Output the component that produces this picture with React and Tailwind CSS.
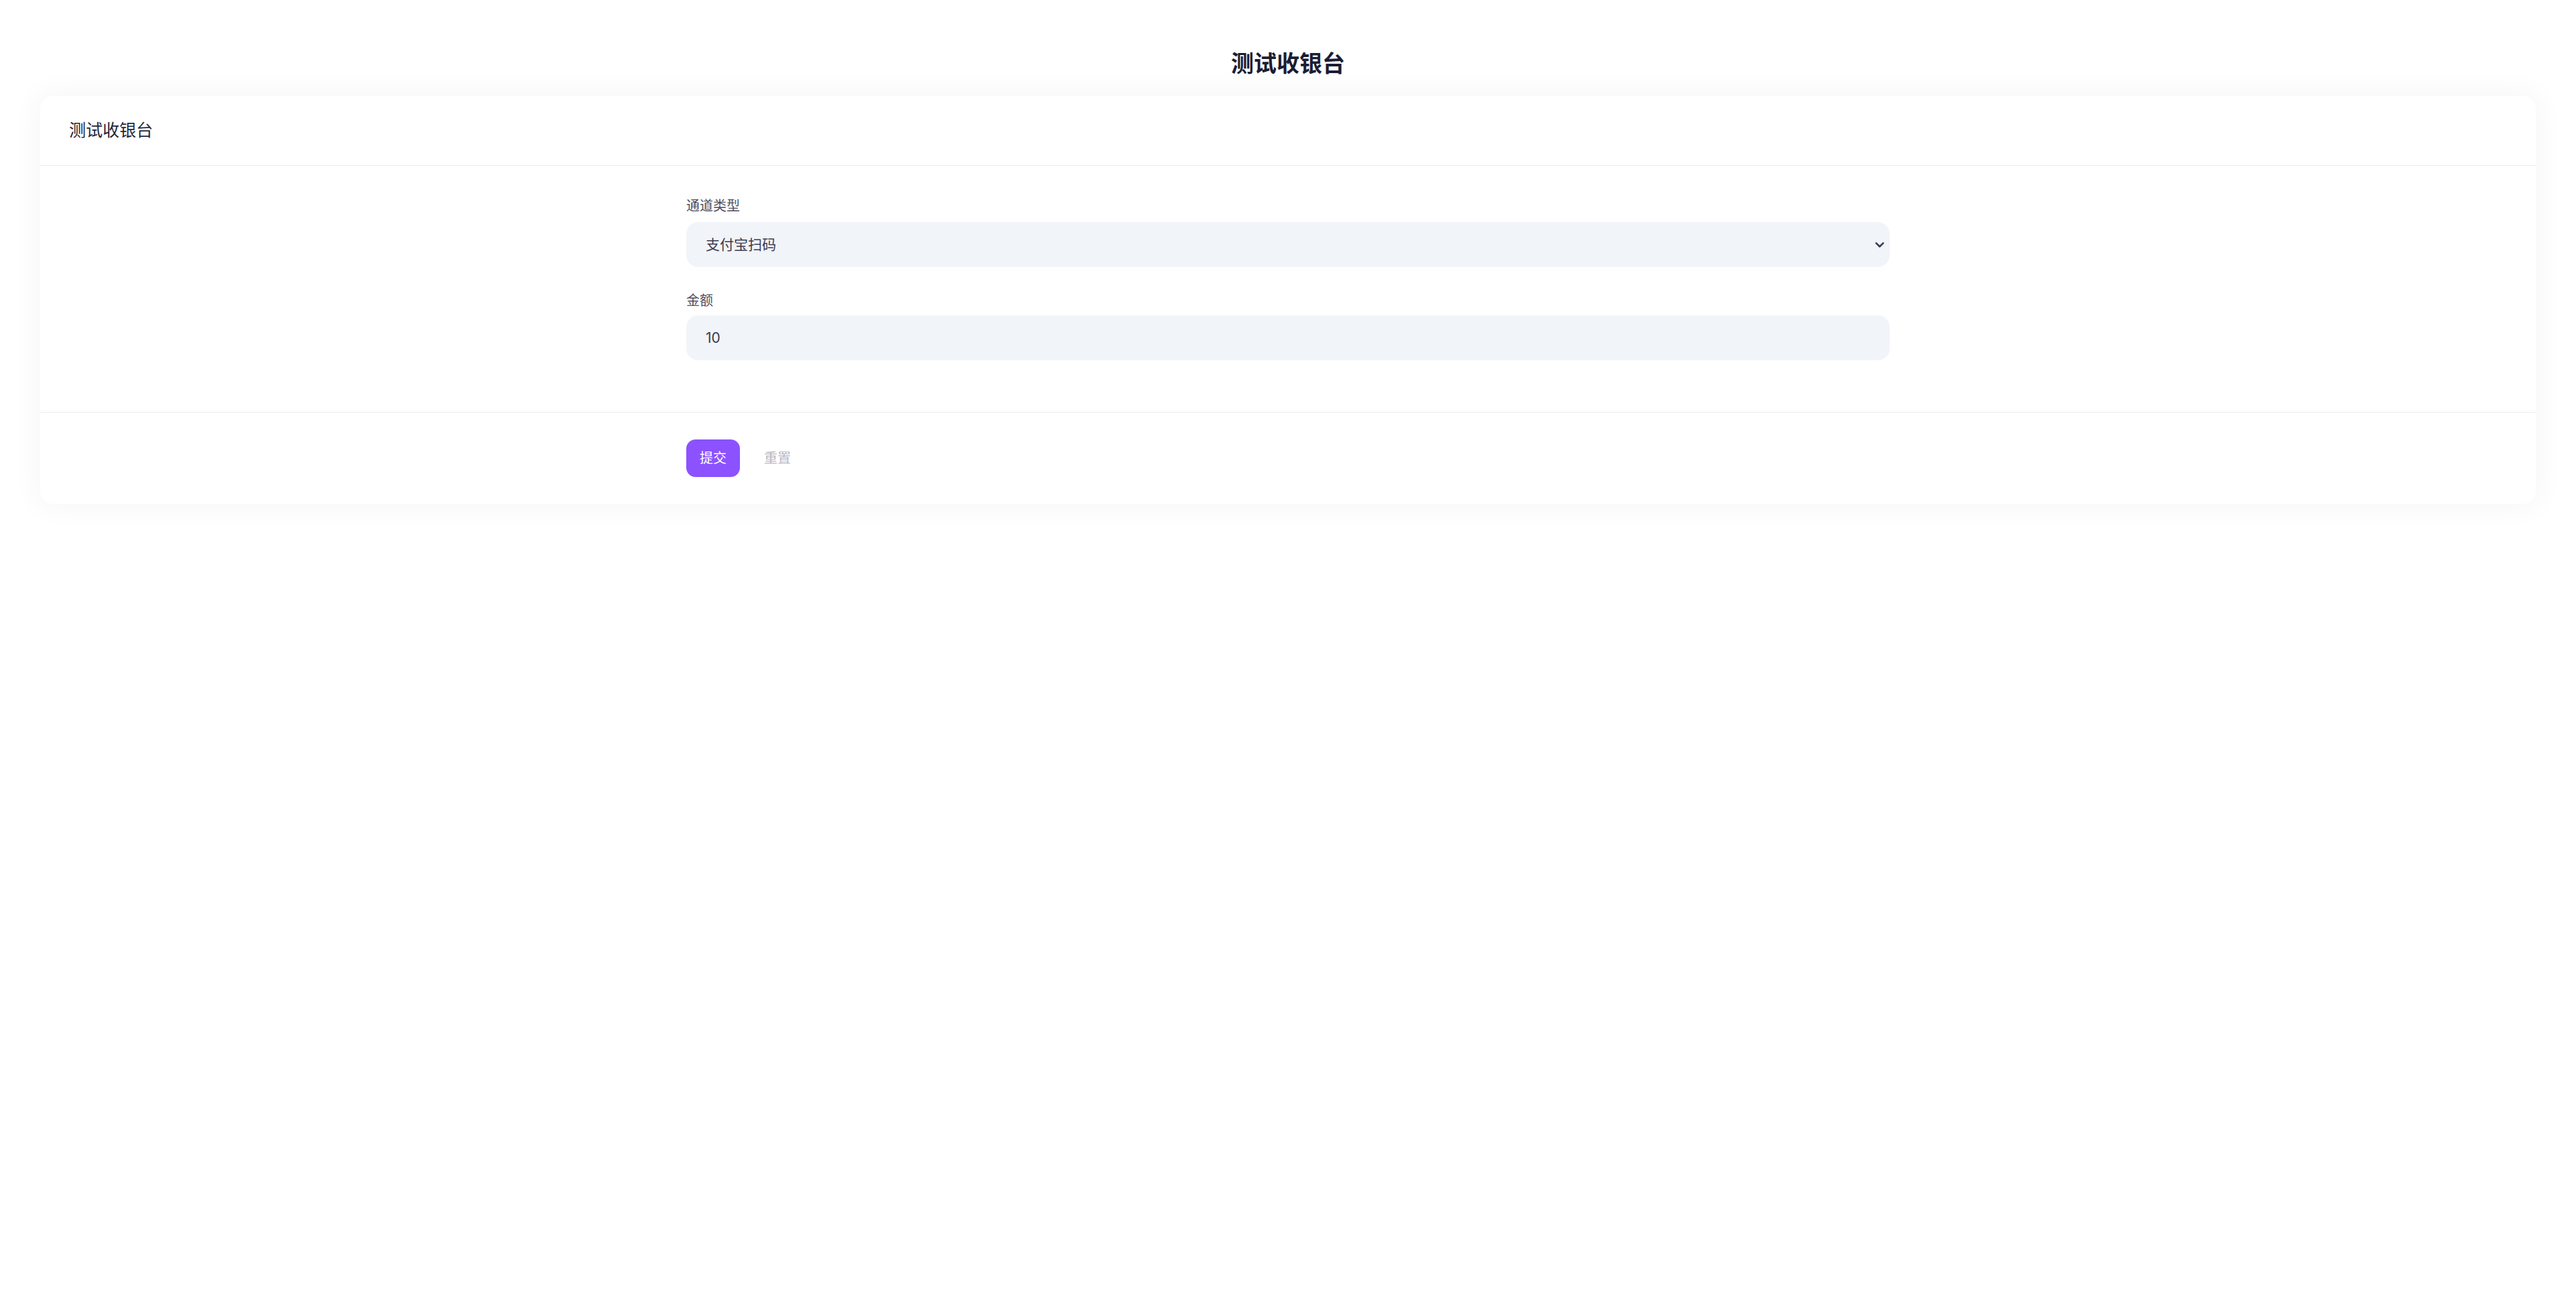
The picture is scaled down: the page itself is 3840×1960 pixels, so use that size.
import { useState } from "react";

const channels = ["支付宝扫码", "微信扫码", "银联支付"];

function Chevron() {
    return (
        <svg
            viewBox="0 0 14 9"
            className="pointer-events-none absolute right-[8px] top-1/2 h-[9px] w-[14px] -translate-y-1/2 text-[#3b3b52]"
            fill="none"
            stroke="currentColor"
            strokeWidth="2.6"
            strokeLinecap="round"
            strokeLinejoin="round"
        >
            <path d="M1.8 1.8 7 7 12.2 1.8" />
        </svg>
    );
}

export default function App() {
    const [channel, setChannel] = useState(channels[0]);
    const [amount, setAmount] = useState("10");

    const reset = () => {
        setChannel(channels[0]);
        setAmount("10");
    };

    return (
        <div className="min-h-screen bg-white px-[60px] font-['Inter','Noto_Sans_CJK_SC',sans-serif]">
            <h1 className="pt-[74px] text-center text-[34px] font-bold leading-[42px] text-[#1b1d33]">
                测试收银台
            </h1>

            <div className="mt-[27px] rounded-[20px] bg-white shadow-[0_0_40px_8px_rgba(0,0,0,0.035)]">
                {/* 卡片标题 */}
                <div className="flex h-[104px] items-center border-b border-[#ebeaf0] px-[43px]">
                    <span className="text-[25px] leading-none text-[#24263a]">测试收银台</span>
                </div>

                {/* 表单 */}
                <div className="border-b border-[#ebeaf0] pb-[77px] pt-[46px]">
                    <div className="mx-auto flex w-[1794px] flex-col">
                        <label className="text-[20px] leading-[28px] text-[#4e4e60]">通道类型</label>
                        <div className="relative mt-[10px]">
                            <select
                                value={channel}
                                onChange={(e) => setChannel(e.target.value)}
                                className="h-[67px] w-full appearance-none rounded-[18px] bg-[#f1f4f8] px-[29px] text-[21px] text-[#3a3b50] outline-none"
                            >
                                {channels.map((c) => (
                                    <option key={c} value={c}>
                                        {c}
                                    </option>
                                ))}
                            </select>
                            <Chevron />
                        </div>

                        <label className="mt-[36px] text-[20px] leading-[28px] text-[#4e4e60]">金额</label>
                        <input
                            value={amount}
                            onChange={(e) => setAmount(e.target.value)}
                            className="mt-[8px] h-[67px] w-full rounded-[18px] bg-[#f1f4f8] px-[29px] text-[21px] text-[#3a3b50] outline-none"
                        />
                    </div>
                </div>

                {/* 操作按钮 */}
                <div className="py-[40px]">
                    <div className="mx-auto flex w-[1794px] items-center gap-4">
                        <button className="h-[56px] rounded-[14px] bg-[#8c52ff] px-5 text-[20px] text-white">
                            提交
                        </button>
                        <button onClick={reset} className="h-[56px] px-5 text-[20px] text-[#b6b6c4]">
                            重置
                        </button>
                    </div>
                </div>
            </div>
        </div>
    );
}
